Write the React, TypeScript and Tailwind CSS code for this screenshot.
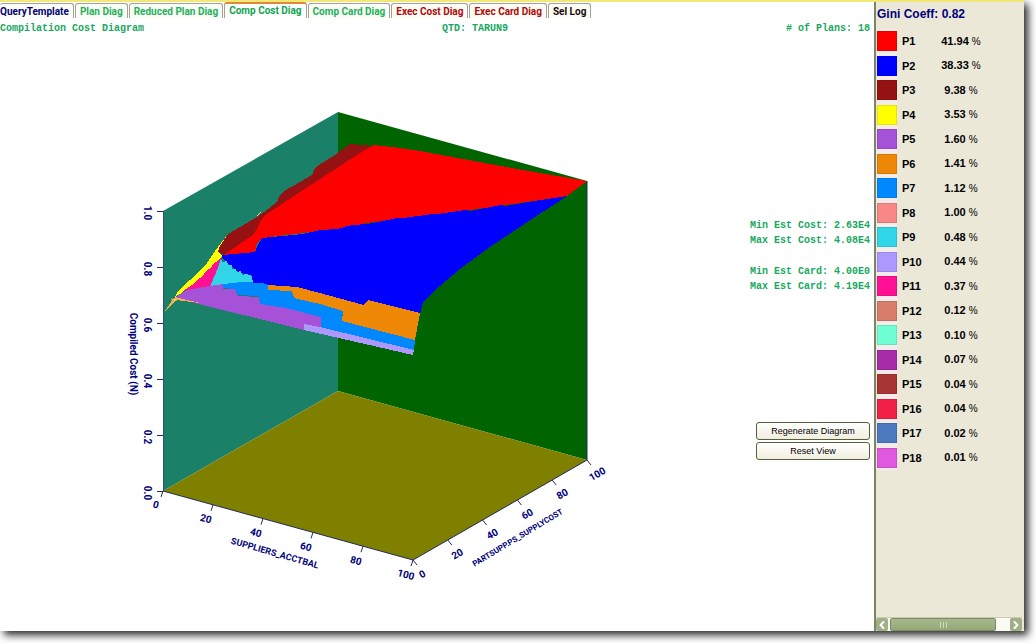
import clsx from "clsx";
import { ChevronLeft, ChevronRight } from "lucide-react";
import { useState } from "react";

const tabs = [
  { label: "QueryTemplate", color: "text-[#00007a]" },
  { label: "Plan Diag", color: "text-[#22b15c]" },
  { label: "Reduced Plan Diag", color: "text-[#22b15c]" },
  { label: "Comp Cost Diag", color: "text-[#12a452]" },
  { label: "Comp Card Diag", color: "text-[#22b15c]" },
  { label: "Exec Cost Diag", color: "text-[#b00808]" },
  { label: "Exec Card Diag", color: "text-[#b00808]" },
  { label: "Sel Log", color: "text-[#200808]" },
];

const plans = [
  { name: "P1", share: "41.94", swatch: "bg-[#ff0000]" },
  { name: "P2", share: "38.33", swatch: "bg-[#0000ff]" },
  { name: "P3", share: "9.38", swatch: "bg-[#961212]" },
  { name: "P4", share: "3.53", swatch: "bg-[#ffff00]" },
  { name: "P5", share: "1.60", swatch: "bg-[#a652d8]" },
  { name: "P6", share: "1.41", swatch: "bg-[#ee8806]" },
  { name: "P7", share: "1.12", swatch: "bg-[#0088ff]" },
  { name: "P8", share: "1.00", swatch: "bg-[#f88888]" },
  { name: "P9", share: "0.48", swatch: "bg-[#30d6e8]" },
  { name: "P10", share: "0.44", swatch: "bg-[#ac98ff]" },
  { name: "P11", share: "0.37", swatch: "bg-[#ff1094]" },
  { name: "P12", share: "0.12", swatch: "bg-[#d87c6c]" },
  { name: "P13", share: "0.10", swatch: "bg-[#70ffd4]" },
  { name: "P14", share: "0.07", swatch: "bg-[#a82ca8]" },
  { name: "P15", share: "0.04", swatch: "bg-[#a83434]" },
  { name: "P16", share: "0.04", swatch: "bg-[#f02046]" },
  { name: "P17", share: "0.02", swatch: "bg-[#4c78c0]" },
  { name: "P18", share: "0.01", swatch: "bg-[#e058e0]" },
];

const surfaces = [
  {
    fill: "#961212",
    points:
      "228,234 240,227 257,217 268,209 277,202 280,195 284,191 300,182 312,175 315,168 319,165 335,155 350,144 374,146 360,153 264,216 260,222 257,229 253,235 224,255 218,252 220,246",
  },
  {
    fill: "#ff0000",
    points:
      "374,145 400,148 420,151 517,169 587,181 567,196 500,206 433,215 367,223 337,229 303,233 262,238 257,243 255,252 222,256 253,235 257,229 260,222 264,216 300,192 360,153",
  },
  {
    fill: "#0000ff",
    points:
      "222,255 255,252 258,245 262,238 303,234 320,230 337,229 352,225 367,224 372,223 398,218 403,218 433,214 438,214 465,210 470,211 500,205 505,206 535,201 567,196 520,227 490,247 460,269 440,286 423,302 420,314 368,301 364,306 320,294 297,288 263,284 252,283 252,277 246,277 242,273 235,270 231,266 226,262 221,257",
  },
  {
    fill: "#30d6e8",
    points:
      "221,257 222,262 227,261 228,265 232,265 232,269 236,269 237,272 241,271 242,275 246,274 252,276 253,283 223,284 210,287 217,270",
  },
  {
    fill: "#ff1094",
    points: "222,256 217,270 210,287 187,291 177,298 187,288 198,280 208,269",
  },
  {
    fill: "#ffff00",
    points:
      "228,234 222,243 219,248 218,252 222,256 218,261 214,263 211,268 206,271 202,277 198,279 192,285 186,289 180,294 175,297 178,291 190,280 199,272 207,263 213,254 218,247",
  },
  {
    fill: "#a652d8",
    points:
      "176,297 187,290 210,286 223,284 223,289 235,289 238,296 259,297 260,304 286,308 321,317 321,334 304,330 183,300",
  },
  {
    fill: "#0088ff",
    points:
      "223,284 242,282 263,283 268,285 268,290 292,291 294,297 320,303 343,311 342,320 415,339 414,351 321,328 321,317 286,308 260,304 259,296 238,295 235,289 223,288",
  },
  {
    fill: "#ee8806",
    points:
      "268,285 297,287 320,293 364,305 368,300 420,313 415,340 342,321 343,311 320,304 294,298 292,291 268,290",
  },
  { fill: "#ac98ff", points: "304,324 320,327 414,350 413,355 304,330" },
  {
    fill: "#f6b050",
    points: "175,297 171,302 165,311 173,304 176,300 200,303 183,299",
  },
];

const costTicks = ["1.0", "0.8", "0.6", "0.4", "0.2", "0.0"];
const percentTicks = ["0", "20", "40", "60", "80", "100"];

const stats = [
  ["Min Est Cost: 2.63E4", "Max Est Cost: 4.08E4"],
  ["Min Est Card: 4.00E0", "Max Est Card: 4.19E4"],
];

export default function App() {
  const [activeTab, setActiveTab] = useState("Comp Cost Diag");

  return (
    <div className="h-screen min-h-[560px] overflow-hidden bg-white pr-3 pb-3 font-['Liberation_Sans',Arial,sans-serif]">
      <div className="flex h-full flex-col border-t-2 border-[#f2e878] bg-white shadow-[4px_4px_8px_rgba(0,0,0,0.85)]">
        <div className="flex min-h-0 flex-1">
          <main className="flex min-w-0 flex-1 flex-col">
            <TabBar activeTab={activeTab} onSelect={setActiveTab} />
            <header className="flex justify-between pt-[3px] pr-1 pb-px font-['Liberation_Mono',monospace] text-[10px] leading-4 font-bold whitespace-nowrap text-[#18a860]">
              <h1>Compilation Cost Diagram</h1>
              <p className="pl-5">QTD: TARUN9</p>
              <p># of Plans: 18</p>
            </header>
            <div className="flex min-h-0 flex-1">
              <CostDiagram />
              <div className="flex w-32 shrink-0 flex-col items-end pt-[180px] pr-1">
                <div className="flex flex-col gap-4 font-['Liberation_Mono',monospace] text-[10px] leading-[15px] font-bold whitespace-nowrap text-[#18a860]">
                  {stats.map((group) => (
                    <div key={group[0]}>
                      {group.map((line) => (
                        <p key={line}>{line}</p>
                      ))}
                    </div>
                  ))}
                </div>
                <div className="mt-32 flex w-[114px] flex-col gap-0.5">
                  <ActionButton label="Regenerate Diagram" />
                  <ActionButton label="Reset View" />
                </div>
              </div>
            </div>
          </main>
          <Legend />
        </div>
      </div>
    </div>
  );
}

function TabBar({
  activeTab,
  onSelect,
}: {
  activeTab: string;
  onSelect: (label: string) => void;
}) {
  return (
    <div className="flex h-4 items-stretch gap-px" role="tablist">
      {tabs.map((tab) => {
        const isActive = tab.label === activeTab;

        return (
          <button
            key={tab.label}
            aria-selected={isActive}
            className={clsx(
              "rounded-t-[3px] border-x border-t px-1 font-['Roboto',sans-serif] text-[10px] leading-3 font-bold whitespace-nowrap first:border-l-0 first:pl-0",
              tab.color,
              isActive
                ? "border-x-[#a8a090] border-t-2 border-t-[#e08838] bg-white"
                : "mt-px border-[#a8a090] bg-[#fcfcf6] pt-0.5",
            )}
            onClick={() => onSelect(tab.label)}
            role="tab"
            type="button"
          >
            {tab.label}
          </button>
        );
      })}
    </div>
  );
}

function ActionButton({ label }: { label: string }) {
  return (
    <button
      className="h-[18px] rounded-[3px] border border-[#52603c] bg-linear-to-b from-white to-[#f1eedf] text-[9px] leading-4 text-black"
      type="button"
    >
      {label}
    </button>
  );
}

function CostDiagram() {
  return (
    <svg
      aria-label="Compilation cost surface"
      className="h-full min-w-0 flex-1 font-['Roboto',sans-serif]"
      preserveAspectRatio="xMinYMin meet"
      role="img"
      viewBox="0 38 746 580"
    >
      <polygon fill="#1b8068" points="163,211 338,112 338,391 163,491" />
      <polygon fill="#006400" points="338,112 587,181 587,460 338,391" />
      <polygon fill="#808000" points="163,491 338,391 587,460 413,560" />

      {surfaces.map((surface) => (
        <polygon
          key={surface.fill}
          fill={surface.fill}
          points={surface.points}
          shapeRendering="crispEdges"
        />
      ))}
      <path d="M257 216l4-4M171 299l6 1" fill="none" stroke="#f8d070" />

      <g fill="none" stroke="#202860">
        <path d="M163.5 211V491" stroke="#2c4c98" />
        <path d="M163 491L413 560L587 460V181" />
        {costTicks.map((tick, i) => (
          <path key={tick} d={`M157 ${211.5 + i * 56}h6`} />
        ))}
        {percentTicks.map((tick, i) => (
          <path key={tick} d={`M${163 + i * 50} ${491 + i * 13.8}l-2 6`} />
        ))}
        {percentTicks.map((tick, i) => (
          <path key={tick} d={`M${413 + i * 34.8} ${560 - i * 20}l4 5`} />
        ))}
      </g>

      <g fill="#00007c" fontSize="10" fontWeight="700" textAnchor="middle">
        {costTicks.map((tick, i) => (
          <text
            key={tick}
            transform={`translate(144 ${213 + i * 56}) rotate(90)`}
          >
            {tick}
          </text>
        ))}
        {percentTicks.map((tick, i) => (
          <text
            key={tick}
            transform={`translate(${155 + i * 50} ${508 + i * 14}) rotate(15)`}
          >
            {tick}
          </text>
        ))}
        {percentTicks.map((tick, i) => (
          <text
            key={tick}
            transform={`translate(${424 + i * 35} ${577 - i * 20}) rotate(-30)`}
          >
            {tick}
          </text>
        ))}
        <text transform="translate(130 354) rotate(90)">Compiled Cost (N)</text>
        <text fontSize="9" transform="translate(274 556) rotate(16)">
          SUPPLIERS_ACCTBAL
        </text>
        <text fontSize="8" transform="translate(519 540) rotate(-31)">
          PARTSUPP.PS_SUPPLYCOST
        </text>
      </g>
    </svg>
  );
}

function Legend() {
  return (
    <aside className="flex w-[150px] shrink-0 flex-col border-l-2 border-[#7c8468] bg-[#ebe8d8]">
      <h2 className="px-px pt-1 pb-[7px] text-xs leading-4 font-bold text-[#00007c]">
        Gini Coeff: 0.82
      </h2>
      <table className="mx-px w-28 table-fixed border-collapse text-[11px] leading-4 text-black">
        <tbody>
          {plans.map((plan) => (
            <tr key={plan.name} className="odd:h-6 even:h-[25px]">
              <td className="w-5 bg-[#f4ebea] p-0">
                <div
                  className={clsx(
                    "h-5 w-5 border border-black/10",
                    plan.swatch,
                  )}
                />
              </td>
              <th className="w-9 p-0 pl-[5px] text-left font-bold" scope="row">
                {plan.name}
              </th>
              <td className="p-0 text-center font-bold whitespace-nowrap">
                {plan.share} <span className="text-[10px] font-normal">%</span>
              </td>
            </tr>
          ))}
        </tbody>
      </table>
      <ScrollBar />
    </aside>
  );
}

function ScrollBar() {
  return (
    <div className="mt-auto mr-0.5 flex h-3.5 gap-0.5 border-t border-[#c8ccb0] bg-[#fbfbf4]">
      <button
        aria-label="Scroll left"
        className="flex w-3 items-center justify-center rounded-[2px] bg-[#a0b084] text-white"
        type="button"
      >
        <ChevronLeft className="h-3 w-3" strokeWidth={4} />
      </button>
      <div className="flex flex-1 items-center justify-center gap-0.5 rounded-[2px] border border-[#7c8c64] bg-linear-to-b from-[#a8b88c] to-[#94a878]">
        <span className="h-1.5 w-px bg-[#d0dcb8]" />
        <span className="h-1.5 w-px bg-[#d0dcb8]" />
        <span className="h-1.5 w-px bg-[#d0dcb8]" />
      </div>
      <div className="w-2.5" />
      <button
        aria-label="Scroll right"
        className="flex w-3 items-center justify-center rounded-[2px] bg-[#a0b084] text-white"
        type="button"
      >
        <ChevronRight className="h-3 w-3" strokeWidth={4} />
      </button>
    </div>
  );
}
